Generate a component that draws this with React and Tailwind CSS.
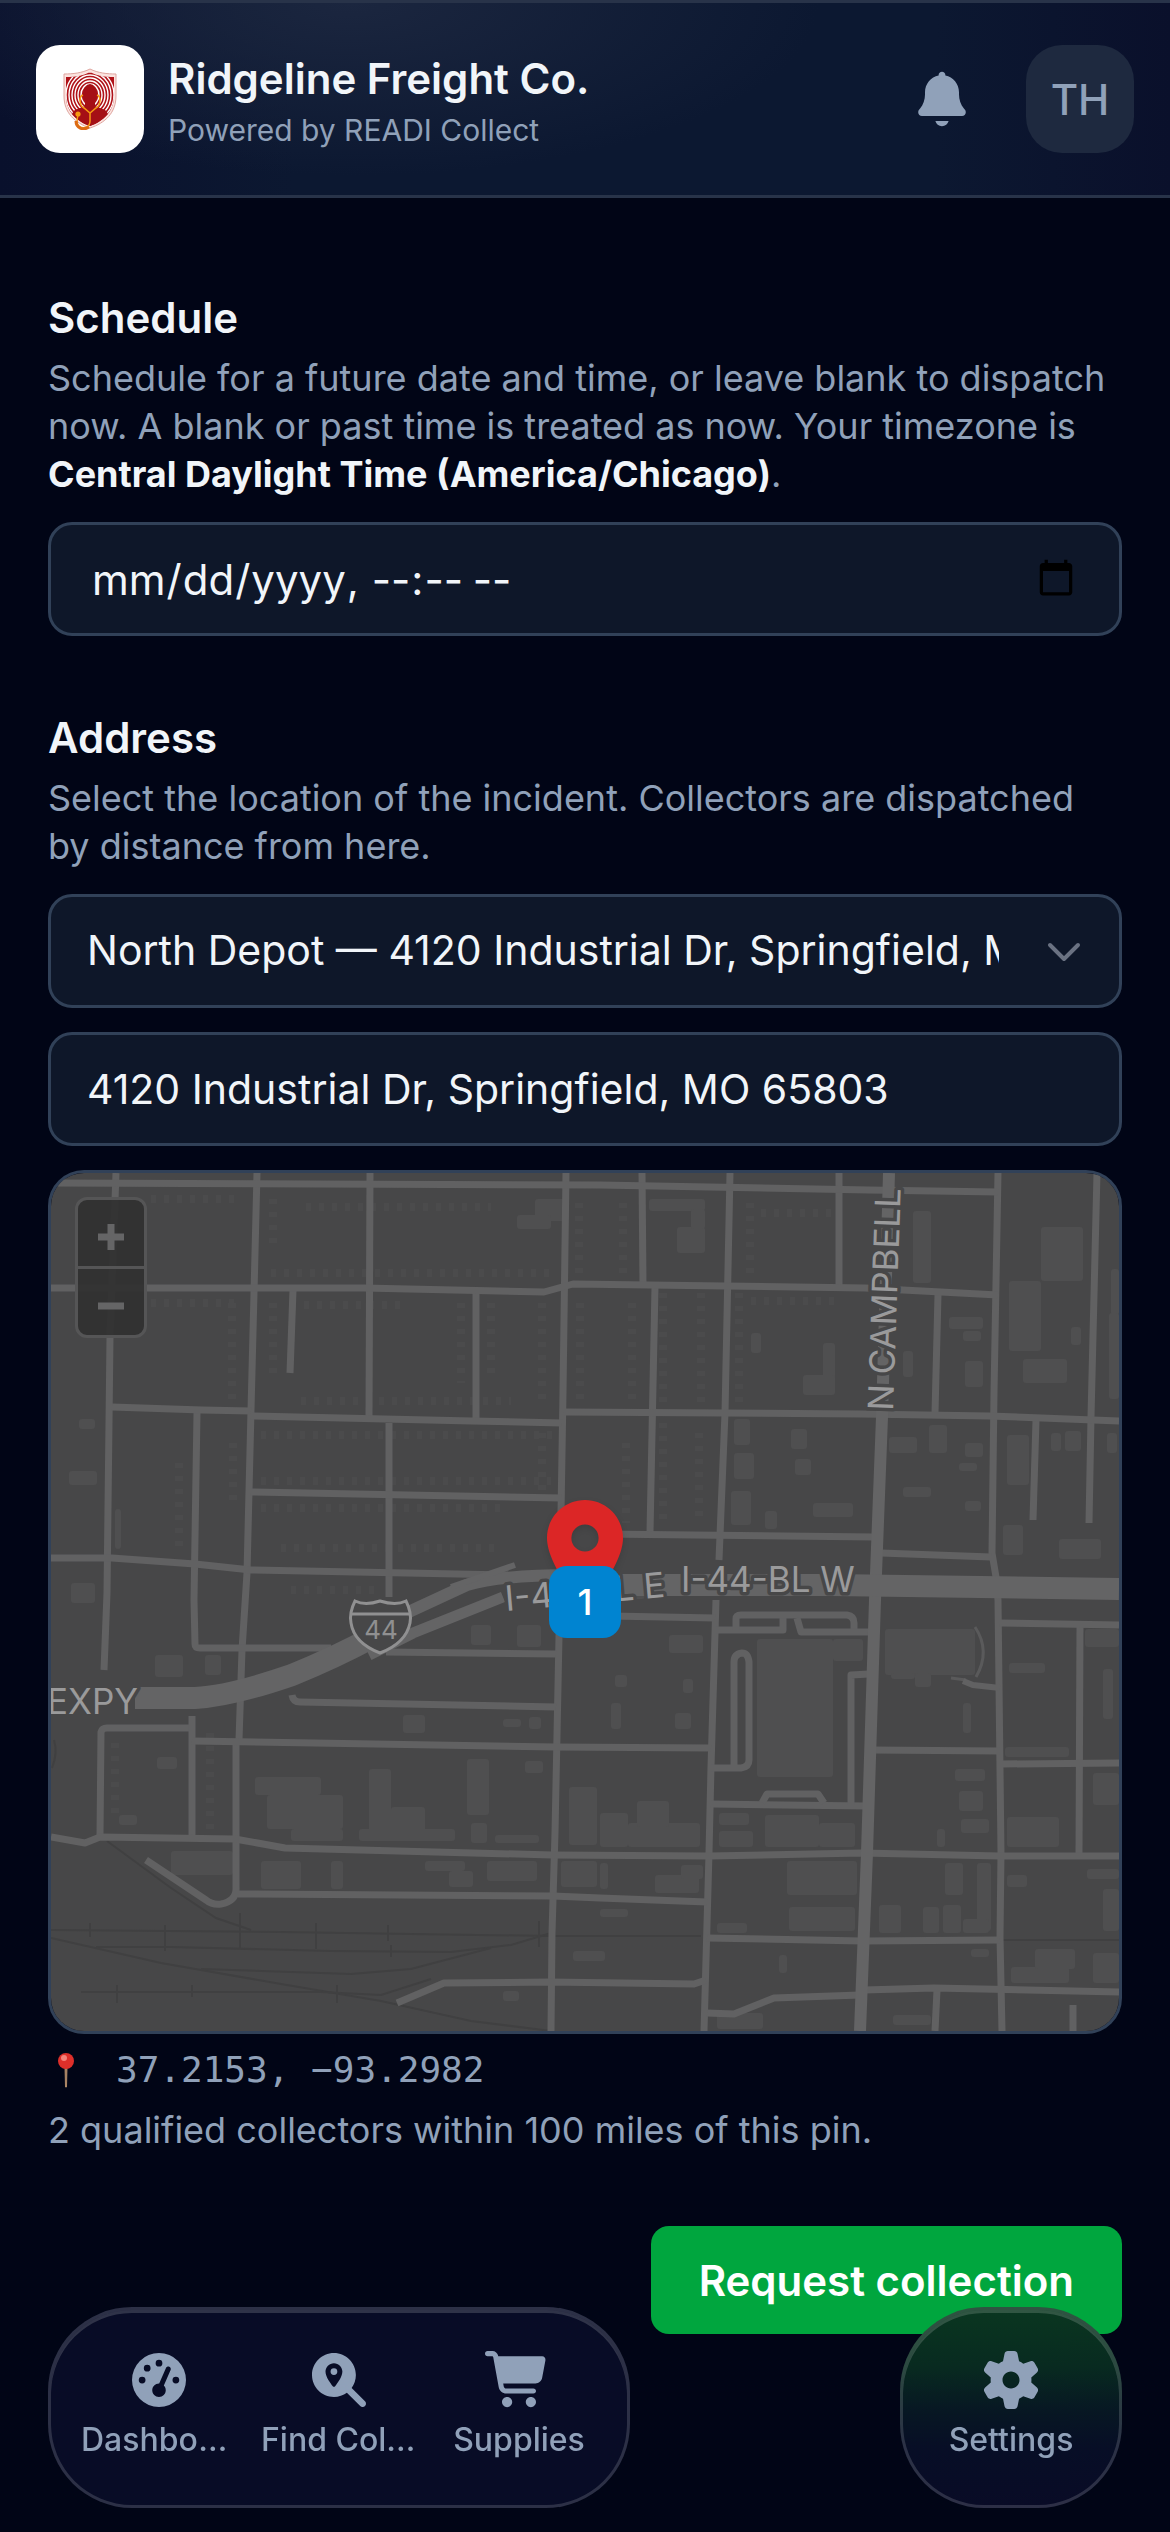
import { useState } from "react";
import { FaGaugeHigh, FaMagnifyingGlassLocation } from "react-icons/fa6";

const depots = [
  {
    id: "north",
    label: "North Depot — 4120 Industrial Dr, Springfield, MO 65803",
    address: "4120 Industrial Dr, Springfield, MO 65803",
  },
];

function BellIcon({ className }) {
  return (
    <svg viewBox="0 0 640 640" fill="currentColor" className={className} aria-hidden="true">
      <path d="M320 64C302.3 64 288 78.3 288 96L288 99.2C215 114 160 178.6 160 256L160 277.7C160 325.8 143.6 372.5 113.6 410.1L103.8 422.3C98.7 428.6 96 436.4 96 444.5C96 464.1 111.9 480 131.5 480L508.4 480C528 480 543.9 464.1 543.9 444.5C543.9 436.4 541.2 428.6 536.1 422.3L526.3 410.1C496.4 372.5 480 325.8 480 277.7L480 256C480 178.6 425 114 352 99.2L352 96C352 78.3 337.7 64 320 64zM258 528C265.1 555.6 290.2 576 320 576C349.8 576 374.9 555.6 382 528L258 528z" />
    </svg>
  );
}

function CartIcon({ className }) {
  return (
    <svg viewBox="0 0 640 640" fill="currentColor" className={className} aria-hidden="true">
      <path d="M24 48C10.7 48 0 58.7 0 72C0 85.3 10.7 96 24 96L69.3 96C73.2 96 76.5 98.8 77.2 102.6L129.3 388.9C135.5 423.1 165.3 448 200.1 448L456 448C469.3 448 480 437.3 480 424C480 410.7 469.3 400 456 400L200.1 400C188.5 400 178.6 391.7 176.5 380.3L171.4 352L475 352C505.8 352 532.2 330.1 537.9 299.8L568.9 133.9C572.6 114.2 557.5 96 537.4 96L124.7 96L124.3 94C119.5 67.4 96.3 48 69.2 48L24 48zM208 576C234.5 576 256 554.5 256 528C256 501.5 234.5 480 208 480C181.5 480 160 501.5 160 528C160 554.5 181.5 576 208 576zM432 576C458.5 576 480 554.5 480 528C480 501.5 458.5 480 432 480C405.5 480 384 501.5 384 528C384 554.5 405.5 576 432 576z" />
    </svg>
  );
}

function GearIcon({ className }) {
  return (
    <svg viewBox="0 0 640 640" fill="currentColor" className={className} aria-hidden="true">
      <path d="M259.1 73.5C262.1 58.7 275.2 48 290.4 48L350.2 48C365.4 48 378.5 58.7 381.5 73.5L396 143.5C410.1 149.5 423.3 157.2 435.3 166.3L503.1 143.8C517.5 139 533.3 145 540.9 158.2L570.8 210C578.4 223.2 575.7 239.8 564.3 249.9L511 297.3C511.9 304.7 512.3 312.3 512.3 320C512.3 327.7 511.8 335.3 511 342.7L564.4 390.2C575.8 400.3 578.4 417 570.9 430.1L541 481.9C533.4 495 517.6 501.1 503.2 496.3L435.4 473.8C423.3 482.9 410.1 490.5 396.1 496.6L381.7 566.5C378.6 581.4 365.5 592 350.4 592L290.6 592C275.4 592 262.3 581.3 259.3 566.5L244.9 496.6C230.8 490.6 217.7 482.9 205.6 473.8L137.5 496.3C123.1 501.1 107.3 495.1 99.7 481.9L69.8 430.1C62.2 416.9 64.9 400.3 76.3 390.2L129.7 342.7C128.8 335.3 128.4 327.7 128.4 320C128.4 312.3 128.9 304.7 129.7 297.3L76.3 249.8C64.9 239.7 62.3 223 69.8 209.9L99.7 158.1C107.3 144.9 123.1 138.9 137.5 143.7L205.3 166.2C217.4 157.1 230.6 149.5 244.6 143.4L259.1 73.5zM320.3 400C364.5 399.8 400.2 363.9 400 319.7C399.8 275.5 363.9 239.8 319.7 240C275.5 240.2 239.8 276.1 240 320.3C240.2 364.5 276.1 400.2 320.3 400z" />
    </svg>
  );
}

function ShieldLogo({ className }) {
  return (
    <svg viewBox="0 0 54 62" fill="none" className={className} aria-hidden="true">
      <defs>
        <clipPath id="shield-clip">
          <path d="M27 4C34 8 42 9 51 9V28C51 43 41 53 27 58C13 53 3 43 3 28V9C12 9 20 8 27 4Z" />
        </clipPath>
      </defs>
      <path
        d="M27 1C35 5 44 6 53 6V28C53 45 42 55 27 60C12 55 1 45 1 28V6C10 6 19 5 27 1Z"
        fill="#fbe3df"
        stroke="#dfa59f"
      />
      <g clipPath="url(#shield-clip)">
        <rect width="54" height="62" fill="#b01218" />
        <g stroke="#fff" strokeWidth="1.4">
          <ellipse cx="27" cy="27" rx="9" ry="11" />
          <ellipse cx="27" cy="27" rx="12" ry="14" />
          <ellipse cx="27" cy="27" rx="15" ry="17" />
          <ellipse cx="27" cy="27" rx="18" ry="20" />
          <ellipse cx="27" cy="27" rx="21" ry="23" />
          <ellipse cx="27" cy="27" rx="24" ry="26" />
        </g>
        <ellipse cx="27" cy="26" rx="7" ry="10" fill="#a50f15" />
        <path d="M22 34H32V38L42 42C46 45 47 52 47 62H7C7 52 8 45 12 42L22 38Z" fill="#a50f15" />
      </g>
      <path
        d="M20 27C15 29 17 38 21 40L27 45L33 40C37 38 39 29 34 27M27 45V53C27 60 20 61 16 58C13 56 14 51 15 47"
        stroke="#f59a12"
        strokeWidth="1.5"
      />
      <path d="M13 53C13 60 20 63 26 59" stroke="#dc6a14" strokeWidth="3" />
      <circle cx="15" cy="46" r="2.6" fill="#f59a12" />
    </svg>
  );
}

const roads = [
  "M65 0L59 164L56 420L53 497",
  "M206 0L203 120L200 237L196 400L191 477L188 567L185 570V714Q186 728 170 731Q161 732 155 727L95 687",
  "M319 0L318 244",
  "M338 250V424",
  "M515 0L512 220L509 400L508 464L504 660L501 760L500 858",
  "M242 117L239 200",
  "M425 120V246",
  "M146 240L143 427L144 471Q144 475 149 475H280",
  "M335 479L505 481",
  "M591 0L592 110",
  "M604 114L599 359",
  "M679 0L674 240L668 387",
  "M665 427L660 594L658 680L653 858",
  "M788 0V112",
  "M887 122L884 240",
  "M947 0L943 220L941 380L945 404L947 427L950 680L949 764L951 858",
  "M1046 0L1040 244L1038 350",
  "M985 247L982 347",
  "M1029 452L1028 682",
  "M886 817L884 858",
  "M1022 832V858",
  "M0 10L549 12L818 17L947 19",
  "M0 115H313L493 119L522 111L814 115L947 122",
  "M61 234L151 237L200 238",
  "M200 243L421 248L511 250",
  "M513 239L811 241L938 243L1068 248",
  "M200 319L510 325",
  "M0 385H61L144 391L200 397L457 402",
  "M549 361L824 364",
  "M830 380L940 384",
  "M560 443L664 445",
  "M949 450L1068 452",
  "M241 522Q242 529 249 529L505 534",
  "M49 663L50 559Q51 555 56 555H141",
  "M141 543V664",
  "M141 568L504 574L660 575",
  "M0 664L34 670L49 664L184 666L234 675L501 682L658 683L811 680L949 683H1068",
  "M187 721L502 723L549 725L656 729",
  "M346 830L393 810L499 809L643 811L655 807",
  "M656 840L683 841L723 825L809 822",
  "M813 817L883 815L1068 819",
  "M656 765L811 768L949 767",
  "M820 577L949 578",
  "M951 591L1068 590",
  "M660 631L816 633",
  "M711 630L716 621H767L773 630",
  "M660 595H690Q698 594 698 587V489Q697 480 691 480Q683 481 683 489V592",
  "M800 632V502L818 501",
  "M665 457H732V445",
  "M685 457V446Q685 442 690 442H796Q803 443 803 450V459",
  "M746 445L750 459H820",
];

// x, y, width, height
const buildings = [
  [484, 26, 34, 22], [466, 42, 34, 14],
  [598, 26, 56, 12], [626, 54, 28, 26], [640, 36, 14, 20],
  [862, 38, 18, 72], [990, 54, 42, 54], [958, 108, 32, 70], [972, 186, 44, 24],
  [1060, 96, 8, 46], [1058, 140, 10, 86], [1020, 154, 10, 18], [700, 160, 10, 20],
  [772, 170, 12, 40], [752, 202, 32, 20], [898, 144, 34, 12], [912, 158, 18, 10],
  [914, 188, 18, 26], [852, 178, 10, 26],
  [683, 246, 16, 26], [683, 280, 20, 26], [680, 318, 20, 34], [740, 256, 16, 20],
  [744, 286, 16, 16], [762, 330, 40, 14], [714, 338, 12, 18],
  [838, 264, 28, 16], [878, 252, 18, 28], [914, 270, 18, 14], [908, 290, 18, 8],
  [852, 314, 28, 10], [914, 328, 16, 10], [956, 262, 22, 50], [1000, 260, 10, 18],
  [1014, 258, 16, 20], [1056, 260, 10, 20], [952, 352, 20, 30], [1008, 366, 42, 20],
  [18, 298, 28, 14], [28, 246, 16, 10], [64, 336, 6, 40], [20, 410, 24, 20],
  [104, 482, 28, 22], [154, 482, 16, 20], [106, 584, 20, 12], [68, 642, 18, 10],
  [576, 404, 18, 22], [420, 452, 20, 20], [466, 452, 24, 22], [618, 462, 34, 18],
  [564, 502, 12, 12], [632, 506, 10, 14], [560, 530, 10, 26], [624, 540, 16, 16],
  [352, 542, 22, 18], [452, 546, 18, 8], [478, 544, 12, 12],
  [204, 604, 66, 18], [216, 622, 76, 34], [240, 656, 52, 12],
  [318, 596, 22, 70], [340, 634, 34, 32], [308, 656, 96, 12], [416, 586, 22, 56],
  [420, 650, 16, 20], [444, 662, 44, 8], [474, 588, 18, 12], [518, 614, 28, 58],
  [549, 640, 28, 34], [577, 650, 72, 24], [586, 628, 32, 26],
  [706, 466, 76, 138], [782, 466, 30, 22],
  [668, 640, 30, 12], [668, 658, 34, 16], [714, 642, 54, 32], [768, 650, 36, 24],
  [834, 456, 90, 46], [864, 500, 16, 14], [840, 500, 24, 6], [912, 530, 8, 30],
  [958, 490, 36, 10], [954, 574, 64, 10], [1034, 456, 34, 18], [1052, 496, 10, 50],
  [904, 596, 30, 12], [908, 618, 24, 20], [910, 646, 28, 14], [886, 656, 8, 18],
  [956, 644, 52, 30], [1042, 600, 26, 32],
  [120, 678, 62, 24], [210, 688, 40, 28], [280, 688, 12, 28], [374, 688, 40, 10],
  [398, 698, 24, 16], [436, 688, 50, 20], [510, 688, 36, 26], [549, 690, 8, 26],
  [604, 702, 44, 18], [630, 692, 22, 14],
  [736, 688, 70, 34], [738, 734, 66, 24], [666, 750, 30, 10], [894, 690, 18, 32],
  [926, 690, 14, 68], [828, 732, 22, 28], [872, 734, 16, 26], [892, 732, 18, 28],
  [912, 746, 26, 14], [956, 702, 20, 12], [1036, 696, 32, 10], [1052, 716, 16, 42],
  [549, 736, 28, 8], [522, 778, 32, 10], [728, 782, 8, 18], [920, 776, 18, 8],
  [960, 794, 58, 16], [984, 776, 40, 20], [1042, 780, 26, 30], [666, 840, 46, 16],
  [842, 842, 38, 10], [452, 818, 16, 10],
];

// rows of small houses
const houseRows = [
  "M255 34H440", "M220 100H500", "M250 228H460", "M210 262H510", "M210 308H500",
  "M210 335H450", "M230 375H450", "M240 132H350", "M222 26V70", "M222 130V200",
  "M181 130V230", "M182 270V330", "M410 130V210", "M440 130V200", "M491 130V230",
  "M491 260V320", "M528 30V100", "M529 130V230", "M572 30V100", "M581 130V230",
  "M612 120V230", "M650 120V230", "M688 120V230", "M699 30V105", "M612 250V350",
  "M648 260V350", "M575 270V350", "M100 26H190", "M710 40H780", "M700 128H790",
  "M100 130H190", "M128 290V380", "M240 417H330", "M159 560V660", "M64 570V640",
];

function StreetMap() {
  return (
    <svg
      viewBox="0 0 1068 858"
      preserveAspectRatio="xMidYMid slice"
      className="block h-full w-full bg-[#474748]"
      role="img"
      aria-label="Street map around the incident"
    >
      <g fill="#4f4f50">
        {buildings.map(([x, y, width, height]) => (
          <rect key={`${x}-${y}`} x={x} y={y} width={width} height={height} rx="3" />
        ))}
      </g>
      <g stroke="#4b4b4c" strokeWidth="8" strokeDasharray="5 8">
        {houseRows.map((d) => (
          <path key={d} d={d} />
        ))}
      </g>

      {/* Railway yard */}
      <g fill="none" stroke="#404041" strokeWidth="2">
        <path d="M56 668L120 715L165 745L200 757" />
        <path d="M0 757L230 759L500 763H650" />
        <path d="M45 774H120L280 778L400 779L460 772L500 760" />
        <path d="M0 765L110 790L230 811L330 828L420 848L500 858" />
        <path d="M150 796L300 801L360 796L440 775" />
        <path d="M30 819H270L330 822L380 806" />
        <path d="M950 767H1068" />
        <path d="M39 750V764M114 752V778M189 740V776M265 750V776M337 752V768M340 772V784M488 748V774M66 812V830M141 812V824M286 812V830" />
        <path d="M3 567Q7 580 1 595" />
      </g>

      <g fill="none" stroke="#616162" strokeWidth="7" strokeLinejoin="round">
        {roads.map((d) => (
          <path key={d} d={d} />
        ))}
      </g>
      <path d="M924 454Q940 478 925 504M900 505L915 507" fill="none" stroke="#5a5a5b" strokeWidth="3" />
      <path d="M912 508L922 512L949 515" fill="none" stroke="#616162" strokeWidth="6" />

      {/* Highway and arterial */}
      <g fill="none" stroke="#646465">
        <path d="M838 0L831 244L824 427L816 680L809 858" strokeWidth="12" />
        <path d="M545 412H780L1068 416" strokeWidth="22" />
        <path d="M84 525H144Q180 523 241 502Q285 484 322 464" strokeWidth="22" />
        <path d="M318 460L362 437L416 412Q450 402 520 402" strokeWidth="12" />
        <path d="M400 414L464 392" strokeWidth="6" />
        <path d="M318 482L362 460L452 424" strokeWidth="11" />
      </g>

      <g
        fill="#9a9a9b"
        stroke="#474748"
        strokeWidth="7"
        strokeLinejoin="round"
        paintOrder="stroke"
        fontFamily="Inter, sans-serif"
        fontSize="35"
      >
        <text x="842" y="238" transform="rotate(-88 842 238)">N CAMPBELL</text>
        <text x="630" y="419">I-44-BL W</text>
        <text x="455" y="438" transform="rotate(-5 455 438)">I-44-BL E</text>
        <text x="87" y="541" textAnchor="end">EXPY</text>
      </g>

      {/* Interstate shield */}
      <path
        d="M304 428Q314 433 329 428Q345 433 355 428Q361 440 359 450Q355 470 329 480Q303 470 300 450Q298 440 304 428Z"
        fill="#474748"
        stroke="#909091"
        strokeWidth="3"
      />
      <path d="M301 441H358" stroke="#909091" strokeWidth="3" />
      <text
        x="330"
        y="466"
        textAnchor="middle"
        fill="#909091"
        fontFamily="Inter, sans-serif"
        fontSize="26"
      >
        44
      </text>
    </svg>
  );
}

function NavItem({ icon, label }) {
  return (
    <a href="#" className="flex w-[180px] flex-col items-center gap-2 px-3">
      <span className="flex size-[68px] items-center justify-center">{icon}</span>
      <span className="max-w-full truncate text-[32px] leading-9 font-medium">{label}</span>
    </a>
  );
}

const pill =
  "flex rounded-[84px] border-[3px] border-white/15 px-[18px] pt-9 pb-[47px] shadow-[inset_0_3px_0_rgba(255,255,255,0.16)]";
const field =
  "h-[114px] w-full rounded-3xl border-[3px] border-[#314158] bg-[#0e1729] text-slate-100 focus:outline-none focus:border-slate-400";

export default function App() {
  const [when, setWhen] = useState("");
  const [depot, setDepot] = useState("north");
  const [address, setAddress] = useState(depots[0].address);

  return (
    <div className="min-h-screen bg-[#010516] font-['Inter',sans-serif] text-slate-400">
      {/* Header */}
      <header className="flex h-[198px] items-center gap-6 border-y-[3px] border-[#283349] bg-[radial-gradient(ellipse_40%_90%_at_30%_0%,#1b263f,transparent),linear-gradient(to_right,#09102c,#0c1831_25%,#0c1831_80%,#0a102b)] px-9">
        <div className="flex size-[108px] shrink-0 items-center justify-center rounded-3xl bg-white">
          <ShieldLogo className="h-[62px] w-[54px]" />
        </div>
        <div className="min-w-0 flex-1 pt-2">
          <h1 className="truncate text-[42px] leading-[54px] font-semibold text-slate-100">
            Ridgeline Freight Co.
          </h1>
          <p className="truncate text-[30px] leading-[48px]">Powered by READI Collect</p>
        </div>
        <button
          type="button"
          aria-label="Notifications"
          className="mr-1.5 flex size-[108px] items-center justify-center cursor-pointer"
        >
          <BellIcon className="size-[68px]" />
        </button>
        <button
          type="button"
          className="flex size-[108px] items-center justify-center rounded-[36px] bg-[#1e293f] text-[42px] font-medium cursor-pointer"
        >
          TH
        </button>
      </header>

      <main className="px-12 pt-[90px] pb-[198px]">
        {/* Schedule */}
        <section>
          <label
            htmlFor="when"
            className="mb-[6px] block text-[42px] leading-[60px] font-semibold text-slate-100"
          >
            Schedule
          </label>
          <p className="text-[36px] leading-[48px]">
            Schedule for a future date and time, or leave blank to dispatch now. A blank or past
            time is treated as now. Your timezone is{" "}
            <strong className="font-bold text-slate-100">
              Central Daylight Time (America/Chicago)
            </strong>
            .
          </p>
          <input
            id="when"
            type="datetime-local"
            value={when}
            onChange={(e) => setWhen(e.target.value)}
            className={`${field} mt-6 px-10 text-[42px]`}
          />
        </section>

        {/* Address */}
        <section className="mt-[72px]">
          <label
            htmlFor="address"
            className="mb-[6px] block text-[42px] leading-[60px] font-semibold text-slate-100"
          >
            Address
          </label>
          <p className="text-[36px] leading-[48px]">
            Select the location of the incident. Collectors are dispatched by distance from here.
          </p>
          <div className="relative mt-6">
            <select
              aria-label="Saved location"
              value={depot}
              onChange={(e) => setDepot(e.target.value)}
              className={`${field} appearance-none pr-[120px] pl-9 text-[41px]`}
            >
              {depots.map((d) => (
                <option key={d.id} value={d.id}>
                  {d.label}
                </option>
              ))}
            </select>
            <svg
              viewBox="0 0 36 24"
              fill="none"
              className="pointer-events-none absolute top-1/2 right-10 h-6 w-9 -translate-y-1/2 text-[#6a7282]"
              aria-hidden="true"
            >
              <path
                d="M4 6L18 20L32 6"
                stroke="currentColor"
                strokeWidth="4"
                strokeLinecap="round"
                strokeLinejoin="round"
              />
            </svg>
          </div>
          <input
            id="address"
            type="text"
            value={address}
            onChange={(e) => setAddress(e.target.value)}
            className={`${field} mt-6 px-9 text-[41px]`}
          />

          {/* Map */}
          <div className="relative mt-6 h-[864px] overflow-hidden rounded-[36px] border-[3px] border-[#314158]">
            <StreetMap />
            <div className="absolute top-6 left-6 flex flex-col divide-y-[3px] divide-[#555556] overflow-hidden rounded-xl border-[3px] border-[#555556] bg-[#313131]/95 text-[#656566]">
              <button
                type="button"
                aria-label="Zoom in"
                className="flex h-[69px] w-[66px] items-center justify-center pt-2 cursor-pointer"
              >
                <svg viewBox="0 0 28 28" className="size-7" aria-hidden="true">
                  <path d="M14 1V27M1 14H27" stroke="currentColor" strokeWidth="7" />
                </svg>
              </button>
              <button
                type="button"
                aria-label="Zoom out"
                className="flex h-[66px] w-[66px] items-center justify-center pt-2 cursor-pointer"
              >
                <svg viewBox="0 0 28 28" className="size-7" aria-hidden="true">
                  <path d="M1 14H27" stroke="currentColor" strokeWidth="7" />
                </svg>
              </button>
            </div>
            <svg
              viewBox="0 0 76 109"
              className="absolute top-[327px] left-1/2 h-[109px] w-[76px] -translate-x-1/2 drop-shadow-md"
              aria-hidden="true"
            >
              <path
                fillRule="evenodd"
                fill="#dc2626"
                d="M38 0C17 0 0 17 0 38C0 66.500 38 108.600 38 108.600S76 66.500 76 38C76 17 59 0 38 0ZM38 51.600A13.600 13.600 0 1 1 38 24.400A13.600 13.600 0 0 1 38 51.600Z"
              />
            </svg>
            <span className="absolute top-[393px] left-1/2 flex size-[72px] -translate-x-1/2 items-center justify-center rounded-[18px] bg-[#0084d1] text-[36px] font-medium text-white">
              1
            </span>
          </div>

          <p className="mt-3 flex items-center text-[36px] leading-[48px] font-['DejaVu_Sans_Mono',monospace]">
            <svg viewBox="0 0 36 36" className="mr-8 size-9" aria-hidden="true">
              <path d="M17 14H19L18.500 35H17.500Z" fill="#b08a68" stroke="#b08a68" />
              <circle cx="18" cy="9" r="8" fill="#dd2f2a" />
              <circle cx="16" cy="6" r="3" fill="#f4837b" />
            </svg>
            37.2153, −93.2982
          </p>
          <p className="mt-3 text-[36px] leading-[48px]">
            2 qualified collectors within 100 miles of this pin.
          </p>
        </section>

        <div className="mt-[72px] flex justify-end">
          <button
            type="submit"
            className="h-[108px] rounded-[18px] bg-[#00a63e] px-12 text-[42px] font-semibold text-white cursor-pointer"
          >
            Request collection
          </button>
        </div>
      </main>

      {/* Bottom navigation */}
      <nav className="fixed inset-x-12 bottom-6 flex justify-between">
        <div className={`${pill} bg-[#080c26]`}>
          <NavItem icon={<FaGaugeHigh className="size-[54px]" />} label="Dashboard" />
          <NavItem
            icon={<FaMagnifyingGlassLocation className="size-[54px]" />}
            label="Find Collectors"
          />
          <NavItem icon={<CartIcon className="size-[68px]" />} label="Supplies" />
        </div>
        <div
          className={`${pill} bg-[linear-gradient(to_bottom,#0a3720,#082a20_30%,#071723_52%,#070e26_70%,#090b26)] bg-origin-border`}
        >
          <NavItem icon={<GearIcon className="size-[68px]" />} label="Settings" />
        </div>
      </nav>
    </div>
  );
}
